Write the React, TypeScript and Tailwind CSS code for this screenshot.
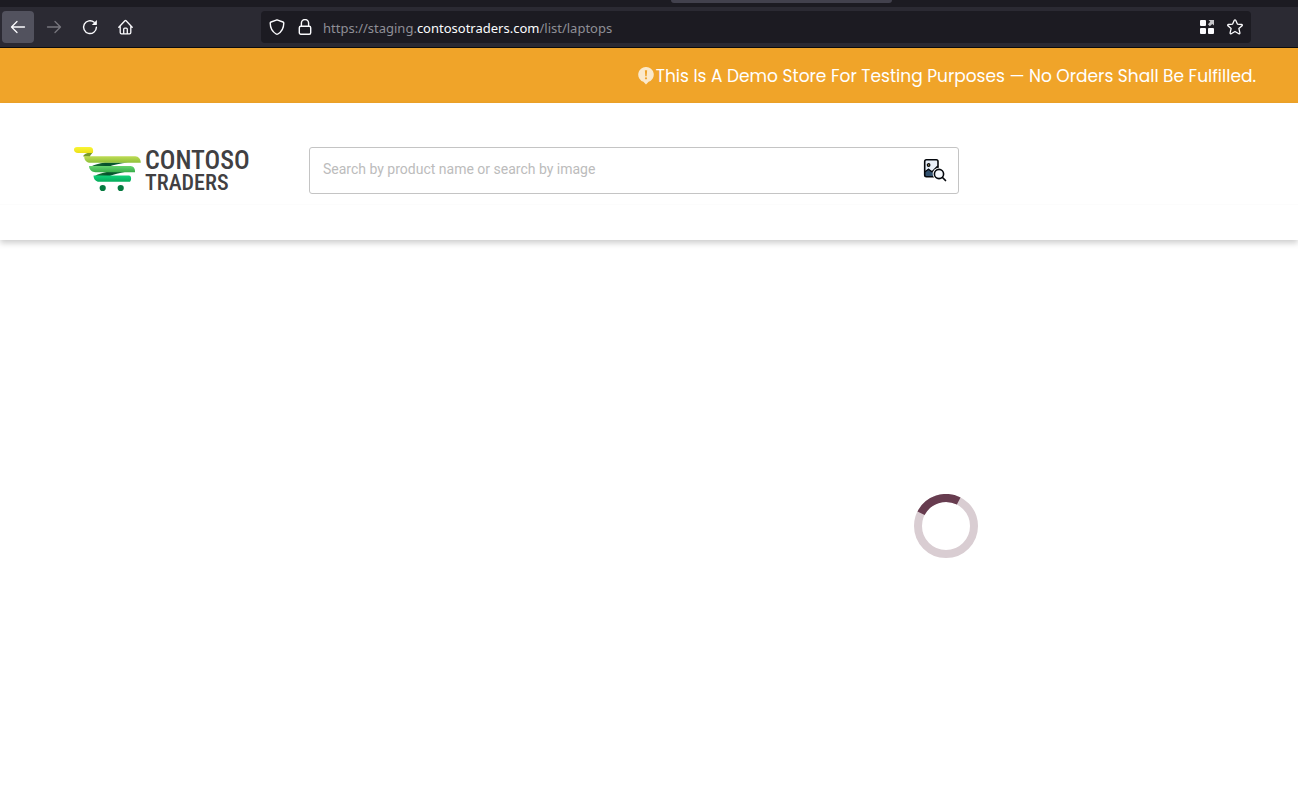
function BackIcon() {
  return (
    <svg width="16" height="16" viewBox="0 0 16 16" fill="none" stroke="currentColor" strokeWidth="1.3" strokeLinecap="round" strokeLinejoin="round" aria-hidden="true">
      <path d="M14.5 8H1.8M7 2.5 1.5 8 7 13.5" />
    </svg>
  );
}

function ForwardIcon() {
  return (
    <svg width="16" height="16" viewBox="0 0 16 16" fill="none" stroke="currentColor" strokeWidth="1.3" strokeLinecap="round" strokeLinejoin="round" aria-hidden="true">
      <path d="M1.5 8h12.7M9 2.5 14.5 8 9 13.5" />
    </svg>
  );
}

function ReloadIcon() {
  return (
    <svg width="16" height="16" viewBox="0 0 16 16" fill="none" aria-hidden="true">
      <path d="M12.2 3.3A6.4 6.4 0 1 0 14.4 8.2" stroke="currentColor" strokeWidth="1.4" strokeLinecap="round" />
      <path d="M14.9 1v4.6c0 .3-.2.5-.5.5H9.8z" fill="currentColor" />
    </svg>
  );
}

function HomeIcon() {
  return (
    <svg width="16" height="16" viewBox="0 0 16 16" fill="none" stroke="currentColor" strokeWidth="1.3" strokeLinecap="round" strokeLinejoin="round" aria-hidden="true">
      <path d="M.8 8.200 6.900 1.800a.9.9 0 0 1 1.200 0l6.100 6.400M2.200 7v6.600c0 .8.5 1.300 1.300 1.300h8c.8 0 1.300-.5 1.300-1.300V7M5.700 14.700v-4.500c0-.6.4-1 1-1h1.600c.6 0 1 .4 1 1v4.500" />
    </svg>
  );
}

function ShieldIcon() {
  return (
    <svg width="16" height="16" viewBox="0 0 16 16" fill="none" stroke="currentColor" strokeWidth="1.4" strokeLinejoin="round" aria-hidden="true">
      <path d="M8 .8 14 3c.5.2.8.6.8 1.1-.1 5.3-2 8.700-5.900 10.900a1.800 1.800 0 0 1-1.800 0C3.200 12.800 1.300 9.400 1.200 4.100c0-.5.3-.9.8-1.100z" />
    </svg>
  );
}

function LockIcon() {
  return (
    <svg width="16" height="16" viewBox="0 0 16 16" fill="none" stroke="currentColor" strokeWidth="1.4" aria-hidden="true">
      <rect x="2.300" y="7.300" width="11.400" height="8" rx="1.500" />
      <path d="M4.400 7.300V4.100a3.600 3.600 0 0 1 7.200 0v3.200" />
    </svg>
  );
}

function AppsIcon() {
  return (
    <svg width="14" height="14" viewBox="0 0 14 14" aria-hidden="true">
      <g fill="#fbfbfe">
        <rect width="6" height="6" rx="1" />
        <rect y="8" width="6" height="6" rx="1" />
        <rect x="8" y="8" width="6" height="6" rx="1" />
      </g>
      <path d="M8.500 0H14v5.500l-1.700-1.600L9.800 6.200 7.900 4.300l2.400-2.500z" fill="#c4c4c8" />
    </svg>
  );
}

function StarIcon() {
  return (
    <svg width="16" height="16" viewBox="0 0 16 16" fill="none" stroke="currentColor" strokeWidth="1.300" strokeLinejoin="round" aria-hidden="true">
      <path d="M7.300 1.200a.8.8 0 0 1 1.400 0l1.700 3.900 4.200.4c.7.1.9.8.5 1.300l-3.200 2.800 1 4.300c.1.700-.5 1.100-1.100.8L8 12.500l-3.800 2.200c-.6.300-1.200-.1-1.100-.8l1-4.300L.9 6.800c-.4-.5-.2-1.200.5-1.300l4.200-.4z" />
    </svg>
  );
}

function NoticeIcon() {
  return (
    <svg width="16" height="18" viewBox="0 0 16 18" aria-hidden="true">
      <path d="M8 0a7.600 7.600 0 0 1 2.600 14.800L8 17.500l-2.600-2.700A7.600 7.600 0 0 1 8 0z" fill="#fbe9cb" />
      <path d="M6.900 3.300h2.200l-.4 6H7.300z" fill="#efa32a" />
      <circle cx="8" cy="11.300" r="1.100" fill="#efa32a" />
    </svg>
  );
}

function CartLogo() {
  return (
    <svg width="68" height="46" viewBox="0 0 68 46" aria-hidden="true">
      <defs>
        <linearGradient id="yellow" x1="0" y1="0" x2="0" y2="1">
          <stop offset="0" stopColor="#f9f535" />
          <stop offset="1" stopColor="#ece018" />
        </linearGradient>
        <linearGradient id="lime" x1="0" y1="0" x2="0" y2="1">
          <stop offset="0" stopColor="#bfdc55" />
          <stop offset="1" stopColor="#8fc038" />
        </linearGradient>
        <linearGradient id="green" x1="0" y1="0" x2="0" y2="1">
          <stop offset="0" stopColor="#66d36f" />
          <stop offset="1" stopColor="#37ad49" />
        </linearGradient>
        <linearGradient id="emerald" x1="0" y1="0" x2="0" y2="1">
          <stop offset="0" stopColor="#10d27a" />
          <stop offset="1" stopColor="#06ab5a" />
        </linearGradient>
        <linearGradient id="fold" x1="0" y1="0" x2="1" y2="0">
          <stop offset="0" stopColor="#1d7a35" />
          <stop offset="0.400" stopColor="#07502c" />
          <stop offset="1" stopColor="#0d6534" />
        </linearGradient>
      </defs>
      <path d="M9.300 9.500c0-2 3-3.500 9.500-5-.5 2.500-3 3.500-3 5.500z" fill="#76992a" />
      <path d="M31 15.500h23c-8 1-14 2-19 4H17c3-1.800 8-3 14-4z" fill="url(#fold)" />
      <path d="M34 24.800h18c-7 1.200-12 2.400-16 4.200H21c3-2 8-3.200 13-4.200z" fill="url(#fold)" />
      <path d="M3 0h13c2.500 0 3.800 2.800 2.800 6H4C1.500 6 0 4.500 0 2.800 0 1 1 0 3 0z" fill="url(#yellow)" />
      <path d="M10.300 9.200h51c3.200 0 5.700 3 5.500 6.600H17c-4.500 0-7-2.600-6.700-6.600z" fill="url(#lime)" />
      <path d="M15 19h41.500c3 0 4.800 2.800 4.500 6.200H21.500c-3.500 0-6.500-2.500-6.500-6.200z" fill="url(#green)" />
      <path d="M19.500 28.500H55c2 0 3 3.500 1 6.300H25c-3 0-5.500-2.500-5.500-6.300z" fill="url(#emerald)" />
      <circle cx="28.700" cy="41" r="3.100" fill="#067a40" />
      <circle cx="46.700" cy="41" r="3.100" fill="#067a40" />
    </svg>
  );
}

function ImageSearchIcon() {
  return (
    <svg width="24" height="24" viewBox="0 0 24 24" fill="none" aria-hidden="true">
      <rect x="2" y="2" width="13" height="17" rx="1.500" fill="#e9eff8" />
      <path d="M2 13.500 5.500 10.500l3.500 3 5.500-5v10H2z" fill="#31506e" />
      <rect x="1.700" y="1.700" width="13.300" height="17" rx="1.700" stroke="#05080d" strokeWidth="1.600" />
      <path d="m2 13.800 3.500-2.500 3.500 2.500L14.800 8" stroke="#05080d" strokeWidth="1.300" />
      <circle cx="5.600" cy="7" r="1.300" fill="#b59a5b" stroke="#05080d" strokeWidth="1.200" />
      <circle cx="16" cy="16" r="6.300" fill="#fff" />
      <circle cx="16" cy="16" r="4.600" fill="#f5f8fc" stroke="#05080d" strokeWidth="1.600" />
      <path d="m19.500 19.500 3 3" stroke="#05080d" strokeWidth="1.700" strokeLinecap="round" />
    </svg>
  );
}

function Spinner() {
  return (
    <svg width="64" height="64" viewBox="0 0 64 64" fill="none" role="status" aria-label="Loading">
      <circle cx="32" cy="32" r="28" stroke="#d9cdd2" strokeWidth="8" />
      <path d="M7.050 19.290A28 28 0 0 1 44.710 7.050" stroke="#673c4f" strokeWidth="8" />
    </svg>
  );
}

function BrowserBar() {
  return (
    <div className="bg-[#2b2a33] border-b border-[#0c0c0d] text-[#fbfbfe]">
      <div className="flex h-[7px] items-start justify-end bg-[#1c1b22] pr-[406px]">
        <div className="h-[3px] w-[221px] rounded-b-sm bg-[#42414d]" />
      </div>
      <div className="flex h-10 items-center pr-[47px] pl-[2px]">
        <nav className="flex gap-1" aria-label="Browser">
          <button type="button" aria-label="Back" className="flex size-8 items-center justify-center rounded bg-[#52525e]">
            <BackIcon />
          </button>
          <button type="button" aria-label="Forward" disabled className="flex size-8 items-center justify-center text-[#77767e]">
            <ForwardIcon />
          </button>
          <button type="button" aria-label="Reload" className="flex size-8 items-center justify-center">
            <ReloadIcon />
          </button>
          <button type="button" aria-label="Home" className="flex size-8 items-center justify-center">
            <HomeIcon />
          </button>
        </nav>
        <div className="ml-[119px] flex h-8 flex-1 items-center rounded bg-[#1c1b22] px-2">
          <button type="button" aria-label="Tracking protection">
            <ShieldIcon />
          </button>
          <button type="button" aria-label="Site information" className="ml-3">
            <LockIcon />
          </button>
          <a href="#" className="ml-[10px] flex-1 pt-[2px] font-['Noto_Sans',sans-serif] text-[13px] leading-5 text-[#8f8f96]">
            https://staging.<span className="text-[#fbfbfe]">contosotraders.com</span>/list/laptops
          </a>
          <button type="button" aria-label="Extensions">
            <AppsIcon />
          </button>
          <button type="button" aria-label="Bookmark this page" className="ml-[13px]">
            <StarIcon />
          </button>
        </div>
      </div>
    </div>
  );
}

export default function App() {
  return (
    <div className="min-h-screen bg-white font-[Roboto,sans-serif]">
      <BrowserBar />
      <div className="flex h-[55px] items-center justify-end gap-[2px] bg-[#f0a429] pr-[42px] text-white">
        <NoticeIcon />
        <p className="font-[Poppins,Inter,sans-serif] text-[17px] leading-6 whitespace-nowrap">
          This Is A Demo Store For Testing Purposes — No Orders Shall Be Fulfilled.
        </p>
      </div>
      <header className="shadow-[0_3px_6px_rgba(0,0,0,0.2)]">
        <div className="flex h-[102px] items-start border-b border-[#fcfcfc] pt-11 pl-[74px]">
          <a href="#" aria-label="Contoso Traders" className="flex w-[235px] shrink-0 gap-[3px] text-[#414042]">
            <CartLogo />
            <span className="flex flex-col font-['Roboto_Condensed','Liberation_Sans_Narrow',sans-serif] font-medium">
              <span className="text-[26px] leading-[26px]">CONTOSO</span>
              <span className="text-[22px] leading-5">TRADERS</span>
            </span>
          </a>
          <form className="flex h-[47px] w-[650px] items-center rounded-[3px] border border-[#c4c4c4] pr-[11px] pb-px pl-3">
            <input
              type="text"
              aria-label="Search products"
              placeholder="Search by product name or search by image"
              className="min-w-0 flex-1 bg-transparent pb-[2px] pl-px text-sm outline-none placeholder:text-[#bcbcbc]"
            />
            <button type="button" aria-label="Search by image">
              <ImageSearchIcon />
            </button>
          </form>
        </div>
        <div className="h-[35px]" />
      </header>
      <main className="flex justify-end pt-[254px] pr-80">
        <Spinner />
      </main>
    </div>
  );
}
